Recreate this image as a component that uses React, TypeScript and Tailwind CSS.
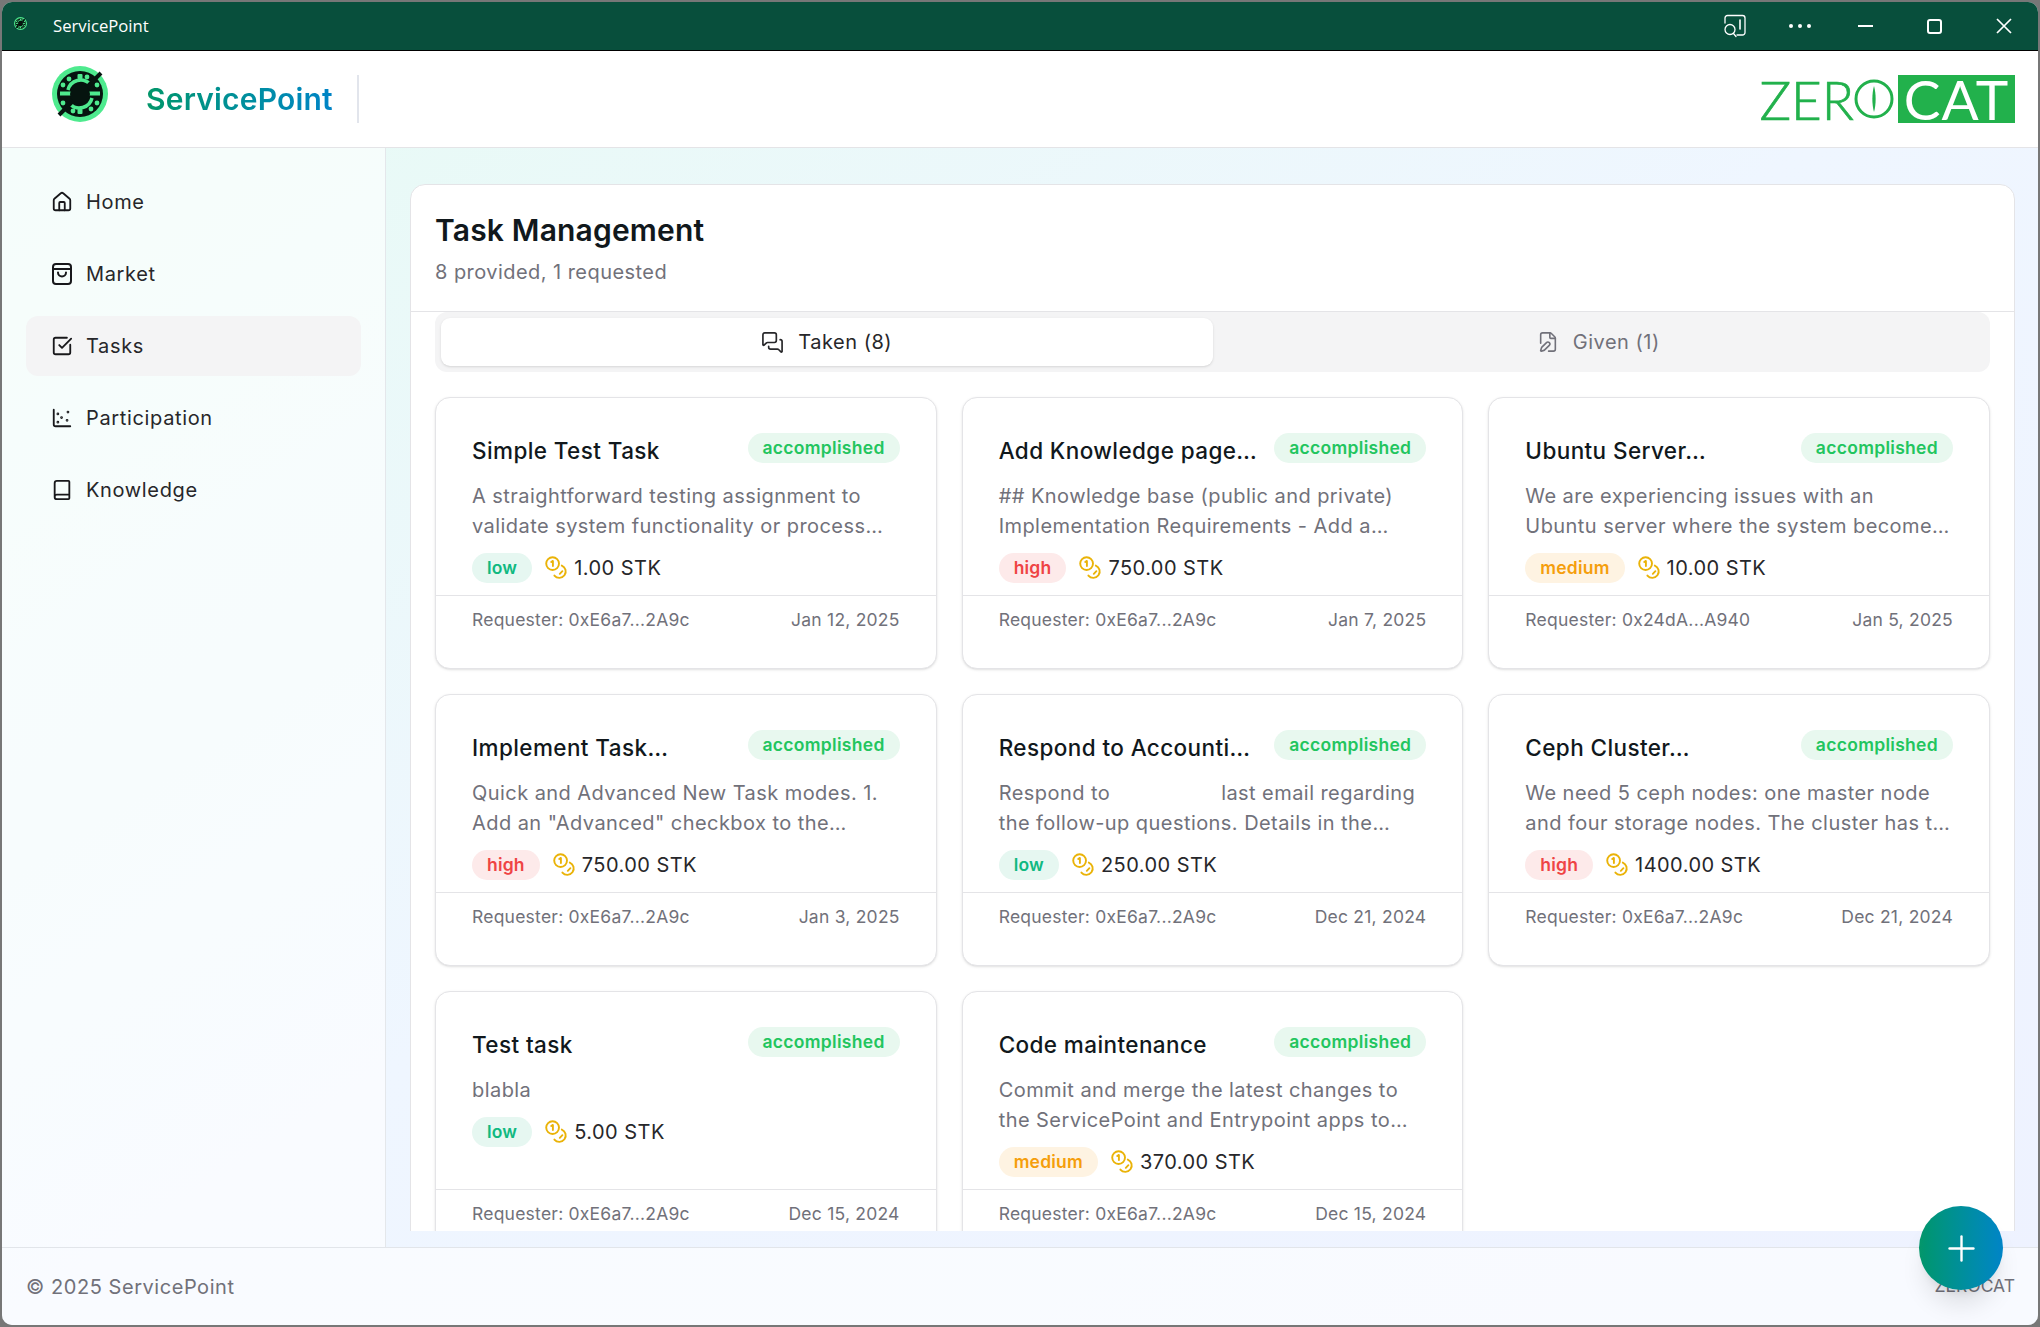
import { Book, ChartScatter, FilePen, House, MessagesSquare, Plus, SquareCheckBig } from "lucide-react";
import type { ReactNode } from "react";

type Level = "low" | "medium" | "high";

type Task = {
  title: string;
  desc: ReactNode;
  level: Level;
  reward: string;
  requester: string;
  date: string;
};

const levelStyles: Record<Level, string> = {
  low: "bg-[#e6f7f1] text-[#10b981]",
  medium: "bg-[#fef3e2] text-[#f59e0b]",
  high: "bg-[#fdeaea] text-[#ef4444]",
};

const tasks: Task[] = [
  {
    title: "Simple Test Task",
    desc: "A straightforward testing assignment to validate system functionality or process…",
    level: "low",
    reward: "1.00 STK",
    requester: "0xE6a7...2A9c",
    date: "Jan 12, 2025",
  },
  {
    title: "Add Knowledge page…",
    desc: "## Knowledge base (public and private) Implementation Requirements - Add a…",
    level: "high",
    reward: "750.00 STK",
    requester: "0xE6a7...2A9c",
    date: "Jan 7, 2025",
  },
  {
    title: "Ubuntu Server…",
    desc: "We are experiencing issues with an Ubuntu\u00a0server where the system become…",
    level: "medium",
    reward: "10.00 STK",
    requester: "0x24dA...A940",
    date: "Jan 5, 2025",
  },
  {
    title: "Implement Task…",
    desc: 'Quick and Advanced New Task modes. 1. Add an "Advanced" checkbox to the…',
    level: "high",
    reward: "750.00 STK",
    requester: "0xE6a7...2A9c",
    date: "Jan 3, 2025",
  },
  {
    title: "Respond to Accounti…",
    desc: (
      <>
        <div className="flex gap-[111px]">
          <span>Respond to</span>
          <span>last email regarding</span>
        </div>
        <div>the follow-up questions. Details in the…</div>
      </>
    ),
    level: "low",
    reward: "250.00 STK",
    requester: "0xE6a7...2A9c",
    date: "Dec 21, 2024",
  },
  {
    title: "Ceph Cluster…",
    desc: "We need 5 ceph nodes: one master node and four storage nodes. The cluster has t…",
    level: "high",
    reward: "1400.00 STK",
    requester: "0xE6a7...2A9c",
    date: "Dec 21, 2024",
  },
  {
    title: "Test task",
    desc: "blabla",
    level: "low",
    reward: "5.00 STK",
    requester: "0xE6a7...2A9c",
    date: "Dec 15, 2024",
  },
  {
    title: "Code maintenance",
    desc: "Commit and merge the latest changes to the\u00a0ServicePoint and Entrypoint apps to…",
    level: "medium",
    reward: "370.00 STK",
    requester: "0xE6a7...2A9c",
    date: "Dec 15, 2024",
  },
];

function Logo({ size }: { size: number }) {
  return (
    <svg width={size} height={size} viewBox="0 0 56 56">
      <circle cx="28" cy="28" r="28" fill="#4eea8e" />
      <circle cx="28" cy="28" r="23" fill="#06140f" />
      <g fill="#4eea8e">
        <rect x="25.5" y="8" width="5" height="5" rx="1" />
        <rect x="25.5" y="43" width="5" height="5" rx="1" />
        <circle cx="17" cy="13" r="2.4" />
        <circle cx="39" cy="43" r="2.4" />
        <circle cx="35" cy="11" r="2.4" />
        <circle cx="21" cy="45" r="2.4" />
        <circle cx="11" cy="19" r="2.4" />
        <circle cx="45" cy="37" r="2.4" />
        <circle cx="45" cy="19" r="2.4" />
        <circle cx="11" cy="37" r="2.4" />
        <rect x="8" y="25.5" width="13" height="4" />
        <rect x="35" y="25.5" width="13" height="4" />
      </g>
      <path d="M16 24a13 13 0 0 1 22-6" fill="none" stroke="#4eea8e" strokeWidth="3.5" />
      <path d="M40 32a13 13 0 0 1-22 6" fill="none" stroke="#4eea8e" strokeWidth="3.5" />
      <circle cx="28" cy="28" r="10" fill="#06140f" />
      <path d="M36 20 49 7M20 36 7 49" stroke="#06140f" strokeWidth="4" />
    </svg>
  );
}

function BagIcon() {
  return (
    <svg width="22" height="24" viewBox="0 0 22 24" fill="none" stroke="currentColor" strokeWidth="2" strokeLinecap="round" strokeLinejoin="round">
      <rect x="2" y="2" width="18" height="20" rx="3" />
      <path d="M2 7h18" />
      <path d="M7 10.5a4 4 0 0 0 8 0" />
    </svg>
  );
}

function CoinsIcon() {
  return (
    <svg width="23" height="24" viewBox="0 0 23 24" fill="none" stroke="#eab308" strokeWidth="1.9" strokeLinecap="round" strokeLinejoin="round" className="shrink-0">
      <circle cx="7.6" cy="7.6" r="6.4" />
      <path d="M6.2 6 7.9 4.9v5.2" />
      <path d="M16.8 9.6a6.4 6.4 0 1 1-7.4 10" />
      <path d="M17.4 15.2l-2.6 2.6" />
    </svg>
  );
}

function InspectIcon() {
  return (
    <svg width="23" height="24" viewBox="0 0 23 24" fill="none" stroke="currentColor" strokeWidth="1.3" strokeLinecap="round">
      <path d="M2 9V4a2.5 2.5 0 0 1 2.5-2.5h15A2.5 2.5 0 0 1 22 4v14.5a2.5 2.5 0 0 1-2.5 2.5H14" />
      <path d="M17 6v9" strokeWidth="1.6" />
      <circle cx="7" cy="15.5" r="5" />
      <path d="M10.5 19.5 13 22.5" />
    </svg>
  );
}

function TitleBar() {
  return (
    <div className="flex h-[48px] shrink-0 items-center justify-between bg-[#084f3c] text-white">
      <div className="flex items-center">
        <div className="ml-[12px] mb-[4px]">
          <Logo size={13} />
        </div>
        <span className="ml-[26px] font-['Open_Sans',sans-serif] text-[16.7px]">ServicePoint</span>
      </div>
      <div className="flex items-center">
        <div className="mr-[2px] flex w-[63px] justify-center">
          <InspectIcon />
        </div>
        <div className="flex w-[63px] justify-center gap-[5px]">
          <span className="h-[4px] w-[4px] rounded-full bg-white" />
          <span className="h-[4px] w-[4px] rounded-full bg-white" />
          <span className="h-[4px] w-[4px] rounded-full bg-white" />
        </div>
        <div className="flex w-[69px] justify-center">
          <span className="h-[2px] w-[15px] bg-white" />
        </div>
        <div className="flex w-[69px] justify-center">
          <span className="h-[15px] w-[15px] rounded-[3px] border-2 border-white" />
        </div>
        <div className="flex w-[69px] justify-center">
          <svg width="16" height="16" viewBox="0 0 16 16" stroke="currentColor" strokeWidth="1.7">
            <path d="M1 1l14 14M15 1 1 15" />
          </svg>
        </div>
      </div>
    </div>
  );
}

function ZeroCatLogo() {
  return (
    <div className="flex h-[48px] items-center font-['Lato',sans-serif] text-[53px] leading-none text-[#22b14c]">
      <span className="font-light [-webkit-text-stroke:0.7px_#22b14c]">ZER</span>
      <svg width="40" height="40" viewBox="0 0 40 40" fill="none">
        <circle cx="20" cy="20" r="18" stroke="#22b14c" strokeWidth="3" />
        <path d="M20 7c-2.2 8-2.2 18 0 26 2.2-8 2.2-18 0-26z" fill="#22b14c" />
      </svg>
      <div className="ml-[4px] flex h-[48px] w-[117px] items-center justify-center bg-[#22b14c] text-[55px] font-normal tracking-[1px] text-white">
        CAT
      </div>
    </div>
  );
}

function Header() {
  return (
    <div className="flex h-[97px] shrink-0 items-center justify-between border-b border-[#e4e4e7] bg-white pr-[23px]">
      <div className="flex items-center">
        <div className="mb-[10px] ml-[50px]">
          <Logo size={56} />
        </div>
        <span className="ml-[38px] bg-gradient-to-r from-[#059669] to-[#0284c7] bg-clip-text text-[30px] font-semibold tracking-[0.2px] text-transparent">
          ServicePoint
        </span>
        <div className="ml-[24px] h-[48px] w-[2px] bg-[#e2e5ec]" />
      </div>
      <ZeroCatLogo />
    </div>
  );
}

const navItems = [
  { label: "Home", icon: <House size={22} strokeWidth={2} /> },
  { label: "Market", icon: <BagIcon /> },
  { label: "Tasks", icon: <SquareCheckBig size={22} strokeWidth={2} />, active: true },
  { label: "Participation", icon: <ChartScatter size={22} strokeWidth={2} /> },
  { label: "Knowledge", icon: <Book size={22} strokeWidth={2} /> },
];

function Sidebar() {
  return (
    <div className="flex w-[384px] shrink-0 flex-col gap-[12px] border-r border-[#e4e7eb] bg-white/60 pl-[24px] pr-[24px] pt-[24px]">
      {navItems.map((item) => (
        <div
          key={item.label}
          className={`flex h-[60px] items-center gap-[13px] rounded-[12px] pl-[25px] text-[20px] tracking-[0.65px] text-[#27272a] ${item.active ? "bg-[#f4f4f5]" : ""}`}
        >
          <span className="flex w-[22px] justify-center text-[#18181b]">{item.icon}</span>
          {item.label}
        </div>
      ))}
    </div>
  );
}

function TaskCard({ task }: { task: Task }) {
  return (
    <div className="flex h-[272px] flex-col rounded-[15px] border border-[#e4e4e7] bg-white shadow-sm">
      <div className="flex-1 px-[36px] pt-[35px]">
        <div className="flex items-start justify-between">
          <span className="text-[22.5px] font-medium leading-[35px] tracking-[0.4px] text-[#11181c]">{task.title}</span>
          <span className="flex h-[30px] items-center rounded-full bg-[#e8f8ef] px-[15px] text-[17.5px] font-semibold tracking-[0.3px] text-[#22c55e]">
            accomplished
          </span>
        </div>
        <div className="mt-[13px] text-[20px] leading-[30px] tracking-[0.44px] text-[#71717a]">{task.desc}</div>
        <div className="mt-[12px] flex items-center">
          <span className={`flex h-[30px] items-center rounded-full px-[15px] text-[17.5px] font-semibold tracking-[0.2px] ${levelStyles[task.level]}`}>
            {task.level}
          </span>
          <span className="ml-[13px] flex items-center gap-[6px] text-[20px] tracking-[0.45px] text-[#27272a]">
            <CoinsIcon />
            {task.reward}
          </span>
        </div>
      </div>
      <div className="flex h-[73px] shrink-0 justify-between border-t border-[#e4e4e7] px-[36px] pt-[11px] text-[17.5px] leading-[25px] tracking-[0.23px] text-[#71717a]">
        <span>Requester: {task.requester}</span>
        <span>{task.date}</span>
      </div>
    </div>
  );
}

function Panel() {
  return (
    <div className="rounded-t-[15px] border border-[#e4e4e7] bg-white">
      <div className="border-b border-[#e4e4e7] px-[24px] pb-[25px] pt-[27px]">
        <div className="text-[30px] font-semibold leading-[36px] tracking-[0.17px] text-[#11181c]">Task Management</div>
        <div className="mt-[10px] text-[20px] leading-[28px] tracking-[0.45px] text-[#71717a]">8 provided, 1 requested</div>
      </div>
      <div className="px-[24px] pb-[24px]">
        <div className="flex h-[60px] rounded-[12px] bg-[#f4f4f5] p-[6px] text-[20px] tracking-[0.5px]">
          <div className="flex flex-1 items-center justify-center gap-[14px] rounded-[9px] bg-white text-[#27272a] shadow-sm">
            <MessagesSquare size={23} strokeWidth={1.75} />
            Taken (8)
          </div>
          <div className="flex flex-1 items-center justify-center gap-[14px] text-[#71717a]">
            <FilePen size={22} strokeWidth={1.75} />
            Given (1)
          </div>
        </div>
        <div className="mt-[25px] grid grid-cols-3 gap-[25px]">
          {tasks.map((task) => (
            <TaskCard key={task.title} task={task} />
          ))}
        </div>
      </div>
    </div>
  );
}

export default function App() {
  return (
    <div className="relative h-[1327px] w-[2040px] overflow-hidden bg-[#777777] p-[2px] font-['Inter',sans-serif]">
      <div className="flex h-full flex-col overflow-hidden rounded-[10px] bg-gradient-to-br from-[#e6fbf3] via-[#eff6ff] to-[#eef2ff]">
        <TitleBar />
        <div className="h-[1px] shrink-0 bg-black" />
        <Header />
        <div className="flex min-h-0 flex-1">
          <Sidebar />
          <div className="min-w-0 flex-1 pb-[16px] pl-[24px] pr-[23px] pt-[36px]">
            <div className="h-full overflow-hidden">
              <Panel />
            </div>
          </div>
        </div>
        <div className="flex h-[78px] shrink-0 items-center justify-between border-t border-[#e2e5ea] bg-white/60 pl-[24px] pr-[23px] text-[#71717a]">
          <span className="text-[20px] tracking-[0.55px]">© 2025 ServicePoint</span>
          <span className="text-[17.5px]">ZEROCAT</span>
        </div>
      </div>
      <div className="absolute left-[1919px] top-[1206px] flex h-[84px] w-[84px] items-center justify-center rounded-full bg-gradient-to-r from-[#059669] to-[#0284c7] text-white shadow-xl">
        <Plus size={41} strokeWidth={1.4} />
      </div>
    </div>
  );
}
